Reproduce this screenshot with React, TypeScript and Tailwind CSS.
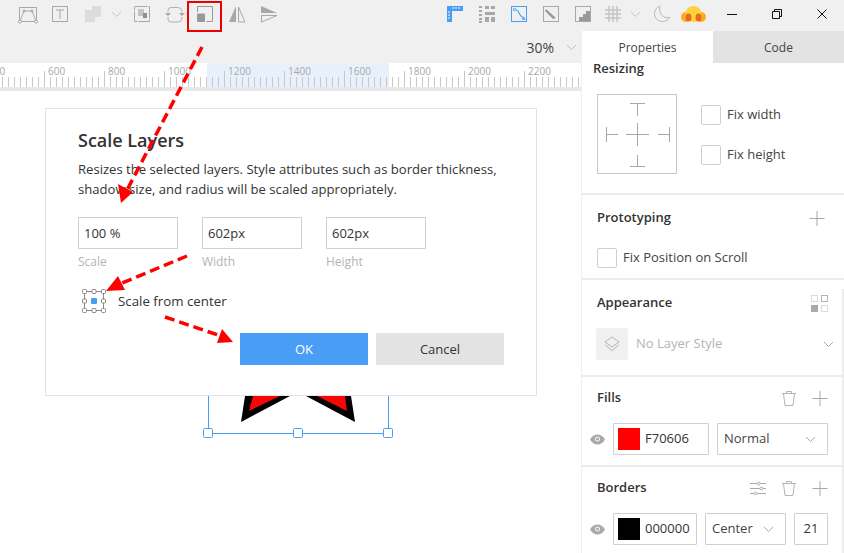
import type { ReactNode } from 'react';

const GREY = '#a8a8a8';
const BLUE = '#4a9df5';

function Icon({ children, className = 'w-8' }: { children: ReactNode; className?: string }) {
  return (
    <div className={`${className} h-6 flex items-center justify-center shrink-0`}>
      <svg width="24" height="24" viewBox="0 0 24 24" fill="none" stroke={GREY} strokeWidth="1">
        {children}
      </svg>
    </div>
  );
}

function Chevron({ className = 'w-4', color = '#c4c4c4' }: { className?: string; color?: string }) {
  return (
    <div className={`${className} flex items-center justify-center shrink-0`}>
      <svg width="11" height="7" viewBox="0 0 11 7" fill="none" stroke={color}>
        <path d="M1 1l4.5 4.5L10 1" />
      </svg>
    </div>
  );
}

function TopBar() {
  return (
    <div className="h-[31px] bg-[#f0f0f0] flex items-start pl-3 shrink-0">
      <div className="flex items-center h-7">
        <Icon>
          <rect x="3.5" y="5.5" width="17" height="14" />
          <path d="M4 19l4-10h8l4 10" />
          <circle cx="4" cy="19.5" r="1.5" fill="#f0f0f0" />
          <circle cx="20" cy="19.5" r="1.5" fill="#f0f0f0" />
          <circle cx="8" cy="9" r="1" fill={GREY} />
          <circle cx="16" cy="9" r="1" fill={GREY} />
        </Icon>
        <Icon>
          <rect x="4.5" y="4.5" width="15" height="15" />
          <path d="M8 8h8M12 8v9" />
        </Icon>
        <Icon>
          <rect x="5" y="8" width="10" height="12" fill="#dcdcdc" stroke="none" />
          <rect x="12" y="4" width="9" height="11" fill="#dcdcdc" stroke="none" />
        </Icon>
        <Chevron />
        <div className="w-0.5" />
        <Icon>
          <rect x="4.5" y="4.5" width="15" height="15" strokeDasharray="13 1" />
          <rect x="8" y="7" width="6" height="7" fill="#c4c4c4" stroke="none" />
          <rect x="13" y="11" width="4" height="5" fill="#8f8f8f" stroke="none" />
        </Icon>
        <Icon>
          <path
            d="M9 5.500h7a4 4 0 0 1 4 4v1M20 15v1a4 4 0 0 1-4 4H9a3 3 0 0 1-3-3v-2M6 10V8.500a3 3 0 0 1 3-3"
            stroke="#b0b0b0"
          />
          <path d="M3 11h6l-3 3zM17 11h6l-3 3z" fill="#a8a8a8" stroke="none" />
        </Icon>
        <div className="-ml-px">
          <Icon>
            <path d="M4.5 10V4.500h15v15h-6" stroke="#999" />
            <rect x="4" y="11.500" width="8" height="8.500" rx="1" fill="#999" stroke="none" />
          </Icon>
        </div>
        <Icon>
          <path d="M11 4v16H4z" fill={GREY} stroke="none" />
          <path d="M13.500 5l6.500 15h-6.500z" />
        </Icon>
        <Icon>
          <path d="M4 4l16 7H4z" fill={GREY} stroke="none" />
          <path d="M4.500 13.500h15.500L4.500 20z" />
        </Icon>
      </div>
      <div className="ml-auto flex items-center h-7">
        <Icon>
          <path d="M4 4h16v5h-11v11H4z" fill={BLUE} stroke="none" />
          <path d="M10 5v2M13 5v2M16 5v2M5 10h2M5 13h2M5 16h2" stroke="#fff" />
        </Icon>
        <Icon>
          <path d="M4 5h3M4 9h3M4 13h3M4 17h3M4 20h3" strokeWidth="2" />
          <rect x="10" y="4" width="4" height="3" fill={GREY} stroke="none" />
          <rect x="16" y="4" width="4" height="3" fill={GREY} stroke="none" />
          <rect x="10" y="10" width="10" height="3" fill={GREY} stroke="none" />
          <rect x="10" y="15" width="4" height="5" fill={GREY} stroke="none" />
          <rect x="16" y="15" width="4" height="5" fill={GREY} stroke="none" />
        </Icon>
        <Icon>
          <rect x="4.500" y="4.500" width="15" height="15" stroke={BLUE} />
          <circle cx="7.500" cy="7.500" r="1.200" stroke={BLUE} />
          <path d="M9 8c2.500 0 2.500 2 3.500 4s2 3 4 3.500" stroke={BLUE} strokeWidth="1.200" />
          <path d="M18.500 18l-4-.5 2.500-3z" fill={BLUE} stroke="none" />
        </Icon>
        <Icon>
          <rect x="4.500" y="4.500" width="15" height="15" />
          <path d="M7 7l10 9-3 1-8-8z" fill="#999" stroke="none" />
        </Icon>
        <Icon>
          <rect x="4.500" y="4.500" width="15" height="15" />
          <path d="M19 9v10H8v-4h4v-3h3V9z" fill="#999" stroke="none" />
        </Icon>
        <div className="-ml-0.5">
          <Icon>
            <path d="M8 4v16M12 4v16M16 4v16M4 8h16M4 12h16M4 16h16" stroke="#c4c4c4" strokeWidth="1.500" />
          </Icon>
        </div>
        <div className="-ml-0.5">
          <Chevron />
        </div>
        <div className="ml-0.5">
          <Icon>
            <path d="M11 4a8 8 0 1 0 9.500 11.500C15 17 9 12 11 4z" stroke="#b8b8b8" />
          </Icon>
        </div>
        <div className="w-8 flex justify-center">
          <svg width="25" height="16" viewBox="0 0 25 16">
            <circle cx="5" cy="11" r="5" fill="#fbab26" />
            <circle cx="20" cy="11" r="5" fill="#fbab26" />
            <circle cx="12.500" cy="8" r="8" fill="#fdd23e" />
            <ellipse cx="7.500" cy="11.500" rx="3" ry="4" fill="#e96a1c" />
            <ellipse cx="17.500" cy="11.500" rx="3" ry="4" fill="#e96a1c" />
          </svg>
        </div>
        <WindowButton>
          <path d="M0 5.500h10" />
        </WindowButton>
        <WindowButton>
          <path d="M.500 2.500h7v7h-7zM2.500 2.500v-2h7v7h-2" />
        </WindowButton>
        <WindowButton>
          <path d="M.500.500l9 9M9.500.500l-9 9" />
        </WindowButton>
      </div>
    </div>
  );
}

function WindowButton({ children }: { children: ReactNode }) {
  return (
    <div className="w-[45px] flex justify-center shrink-0">
      <svg width="10" height="10" viewBox="0 0 10 10" fill="none" stroke="#111">
        {children}
      </svg>
    </div>
  );
}

function Ruler() {
  const ticks = Array.from({ length: 100 }, (_, i) => -16 + i * 6);
  const labels = [400, 600, 800, 1000, 1200, 1400, 1600, 1800, 2000, 2200];
  return (
    <div className="h-6 bg-white shrink-0">
      <svg width="581" height="24" viewBox="0 0 581 24" className="block">
        <rect x="207" y="0" width="182" height="24" fill="#e8f1fb" />
        {ticks.map((x, i) => (
          <path key={x} d={`M${x + 0.5} ${i % 10 === 0 ? 8 : 14}V24`} stroke="#c8c8c8" />
        ))}
        {labels.map((v) => (
          <text
            key={v}
            x={-16 + (v / 200 - 2) * 60 + 4}
            y="12"
            fontSize="10"
            fill="#a8a8a8"
            fontFamily="'Open Sans', sans-serif"
          >
            {v}
          </text>
        ))}
      </svg>
    </div>
  );
}

function DialogField({ value, label }: { value: string; label: string }) {
  return (
    <div className="w-[100px]">
      <div className="h-8 border border-[#cfcfcf] px-[5px] pt-0.5 flex items-center text-[13px] text-[#333]">
        {value}
      </div>
      <div className="mt-[5px] text-[12px] leading-4 text-[#b4b4b4]">{label}</div>
    </div>
  );
}

function AnchorIcon() {
  const squares = [
    [2.5, 2.5], [12, 2.5], [21.5, 2.5],
    [2.5, 12], [21.5, 12],
    [2.5, 21.5], [12, 21.5], [21.5, 21.5],
  ];
  return (
    <svg width="24" height="24" viewBox="0 0 24 24" fill="none" stroke="#888" className="shrink-0">
      <rect x="2.500" y="2.500" width="19" height="19" />
      {squares.map(([x, y]) => (
        <rect key={`${x}-${y}`} x={x - 2} y={y - 2} width="4" height="4" rx="1" fill="#fff" />
      ))}
      <rect x="9" y="9" width="6" height="6" rx="1" fill={BLUE} stroke="none" />
    </svg>
  );
}

function Dialog() {
  return (
    <div className="absolute left-[45px] top-[17px] w-[492px] h-[288px] bg-white border border-[#e2e2e2] px-8 pt-[19px]">
      <h1 className="text-[18px] leading-6 font-semibold text-[#333]">Scale Layers</h1>
      <p className="mt-[7px] text-[13.100px] leading-5 text-[#333] whitespace-nowrap">
        Resizes the selected layers. Style attributes such as border thickness,
        <br />
        shadow size, and radius will be scaled appropriately.
      </p>
      <div className="mt-[18px] flex gap-6">
        <DialogField value="100 %" label="Scale" />
        <DialogField value="602px" label="Width" />
        <DialogField value="602px" label="Height" />
      </div>
      <div className="mt-[19px] ml-1 flex items-center gap-3 text-[13.300px] text-[#333]">
        <AnchorIcon />
        <span className="pt-0.5">Scale from center</span>
      </div>
      <div className="mt-5 flex justify-end gap-2 text-[13px]">
        <div className="w-32 h-8 pt-0.5 bg-[#4a9df5] text-white flex items-center justify-center">OK</div>
        <div className="w-32 h-8 pt-0.5 bg-[#e3e3e3] text-[#333] flex items-center justify-center">Cancel</div>
      </div>
    </div>
  );
}

function Canvas() {
  return (
    <div className="relative flex-1 bg-white">
      <svg width="581" height="462" viewBox="0 91 581 462" className="absolute left-0 top-0">
        <path d="M245 396L241 422 290 396z" fill="#000" />
        <path d="M306 396L355 422 351 396z" fill="#000" />
        <path d="M253 396L249 411 280 396z" fill="#f70606" />
        <path d="M317 396L347 411 345 396z" fill="#f70606" />
        <rect x="208.500" y="380.500" width="180" height="53" stroke={BLUE} fill="none" />
        {[208, 298, 388].map((x) => (
          <rect key={x} x={x - 4.500} y="428.500" width="9" height="9" rx="1" fill="#fff" stroke={BLUE} />
        ))}
      </svg>
      <Dialog />
    </div>
  );
}

function Section({ title, actions, children, className }: {
  title: string;
  actions?: ReactNode;
  children: ReactNode;
  className: string;
}) {
  return (
    <section className={`pl-[15px] pr-4 ${className}`}>
      <div className="flex items-center h-5 justify-between">
        <h2 className="text-[13px] font-semibold text-[#333]">{title}</h2>
        <div className="flex items-center gap-4">{actions}</div>
      </div>
      {children}
    </section>
  );
}

function Plus() {
  return (
    <svg width="16" height="16" viewBox="0 0 16 16" stroke={GREY}>
      <path d="M.5 8.500h15M8 1v15" />
    </svg>
  );
}

function Trash() {
  return (
    <svg width="14" height="16" viewBox="0 0 14 16" fill="none" stroke="#b4b4b4">
      <path d="M0 3.500h14M4.500 3V1.500h5V3M1.500 3.500l1.500 12h8l1.500-12" />
    </svg>
  );
}

function Sliders() {
  return (
    <svg width="16" height="14" viewBox="0 0 16 14" fill="none" stroke="#aaa">
      <path d="M0 2.500h7M10 2.500h6M0 7.500h10M13 7.500h3M0 12.500h4M7 12.500h9" />
      <circle cx="8.500" cy="2.500" r="1.500" />
      <circle cx="11.500" cy="7.500" r="1.500" />
      <circle cx="5.500" cy="12.500" r="1.500" />
    </svg>
  );
}

function Eye() {
  return (
    <svg width="15" height="11" viewBox="0 0 15 11" className="shrink-0">
      <path d="M0 5.500C2 2 4.500 .5 7.500 .5S13 2 15 5.500C13 9 10.500 10.500 7.500 10.500S2 9 0 5.500z" fill="#aaa" />
      <circle cx="7.500" cy="5" r="2.500" fill="#f4f4f4" />
      <circle cx="7.500" cy="5" r="1.500" fill="#aaa" />
    </svg>
  );
}

function Checkbox({ label }: { label: string }) {
  return (
    <div className="flex items-center gap-[6px] text-[13px] text-[#444]">
      <span className="w-5 h-5 border border-[#cfcfcf] rounded-[2px] shrink-0" />
      {label}
    </div>
  );
}

function ResizeBox() {
  return (
    <div className="w-20 h-20 border border-[#c8c8c8] shrink-0">
      <svg width="78" height="78" viewBox="0 0 78 78" fill="none" stroke={GREY}>
        <path d="M32 8.500h15M39.500 8v13M32 71.500h15M39.500 60v11M8.500 32v15M8 39.500h12M71.500 32v15M60 39.500h11M28 39.500h23M39.500 28v23" />
      </svg>
    </div>
  );
}

function ColorField({ color, value, className }: { color: string; value: string; className: string }) {
  return (
    <div className={`h-8 border border-[#cfcfcf] rounded-[1px] flex items-center pl-1 gap-[5px] text-[13px] text-[#333] ${className}`}>
      <span className="w-[22px] h-[22px] shrink-0" style={{ backgroundColor: color }} />
      {value}
    </div>
  );
}

function SelectField({ value, className }: { value: string; className: string }) {
  return (
    <div className={`h-8 border border-[#cfcfcf] rounded-[1px] flex items-center justify-between pl-[6px] pr-[11px] text-[13px] text-[#444] ${className}`}>
      {value}
      <Chevron className="w-[11px]" color="#aaa" />
    </div>
  );
}

function Inspector() {
  const rule = 'border-b-2 border-[#ececec]';
  return (
    <aside className="relative w-[263px] shrink-0 flex flex-col bg-white border-l border-[#efefef] text-[#333] overflow-hidden">
      <div className="h-8 flex shrink-0 text-[12px] font-medium text-[#444]">
        <div className="w-[131px] pt-px bg-white flex items-center justify-center">Properties</div>
        <div className="flex-1 pt-px bg-[#e3e3e3] flex items-center justify-center">Code</div>
      </div>
      <section className={`h-[132px] pr-4 ${rule}`}>
        <h2 className="pl-[11px] text-[13px] font-semibold leading-[11px] text-[#333]">Resizing</h2>
        <div className="mt-5 ml-[15px] flex items-center gap-6">
          <ResizeBox />
          <div className="flex flex-col gap-5 pt-0.5">
            <Checkbox label="Fix width" />
            <Checkbox label="Fix height" />
          </div>
        </div>
      </section>
      <Section
        title="Prototyping"
        actions={<div className="mr-[3px] flex"><Plus /></div>}
        className={`h-[85px] pt-[13px] ${rule}`}
      >
        <div className="mt-5">
          <Checkbox label="Fix Position on Scroll" />
        </div>
      </Section>
      <Section
        title="Appearance"
        className={`h-[97px] pt-[13px] ${rule}`}
        actions={
          <svg width="17" height="17" viewBox="0 0 17 17" fill="none" stroke="#b4b4b4">
            <rect x=".5" y=".5" width="6" height="6" strokeDasharray="1 1" />
            <rect x="10.500" y=".5" width="6" height="6" />
            <rect x="0" y="10" width="7" height="7" fill="#aaa" stroke="none" />
            <rect x="10.500" y="10.500" width="6" height="6" strokeDasharray="1 1" />
          </svg>
        }
      >
        <div className="mt-[15px] flex items-center text-[13px] text-[#b4b4b4] -ml-px">
          <div className="w-8 h-8 rounded-[2px] bg-[#f0f0f0] flex items-center justify-center mr-2">
            <svg width="18" height="18" viewBox="0 0 18 18" fill="none" stroke="#b4b4b4">
              <path d="M9 2l7 5-7 5-7-5zM2 10l7 5.500 7-5.500" />
            </svg>
          </div>
          No Layer Style
          <Chevron className="w-[11px] ml-auto -mr-[6px]" color="#aaa" />
        </div>
      </Section>
      <Section
        title="Fills"
        className={`h-[90px] pt-[11px] ${rule}`}
        actions={
          <>
            <Trash />
            <Plus />
          </>
        }
      >
        <div className="mt-[15px] -ml-[7px] flex items-center">
          <Eye />
          <ColorField color="#ff0000" value="F70606" className="w-24 ml-2" />
          <SelectField value="Normal" className="w-[111px] ml-2" />
        </div>
      </Section>
      <Section
        title="Borders"
        className="flex-1 pt-[11px]"
        actions={
          <>
            <Sliders />
            <Trash />
            <Plus />
          </>
        }
      >
        <div className="mt-[15px] -ml-[7px] flex items-center">
          <Eye />
          <ColorField color="#000000" value="000000" className="w-[84px] ml-2" />
          <SelectField value="Center" className="w-[81px] ml-2" />
          <div className="w-[34px] h-8 ml-2 border border-[#cfcfcf] rounded-[1px] flex items-center justify-center text-[13px] text-[#333]">
            21
          </div>
        </div>
      </Section>
      <div className="absolute right-0 top-[258px] bottom-0 w-0.5 bg-[#ececec]" />
    </aside>
  );
}

function Arrow({ d, head }: { d: string; head: string }) {
  return (
    <>
      <path d={d} stroke="#ff0000" strokeWidth="3.500" strokeDasharray="10 5" fill="none" />
      <path d={head} fill="#ff0000" />
    </>
  );
}

export default function App() {
  return (
    <div
      className="relative w-[844px] h-[553px] overflow-hidden flex flex-col bg-white"
      style={{ fontFamily: "'Open Sans', 'Noto Sans', sans-serif" }}
    >
      <TopBar />
      <div className="flex-1 flex min-h-0">
        <main className="w-[581px] shrink-0 flex flex-col">
          <div className="h-8 pt-px bg-[#f0f0f0] flex items-center justify-end text-[14px] text-[#444] shrink-0">
            30%
            <Chevron className="w-5 ml-[7px]" />
          </div>
          <Ruler />
          <div className="h-1 bg-[#e8e8e8] shrink-0" />
          <Canvas />
        </main>
        <Inspector />
      </div>
      <div className="absolute left-[187px] top-px w-[35px] h-[31px] border-2 border-[#ee0000]" />
      <svg width="844" height="553" className="absolute left-0 top-0 pointer-events-none">
        <Arrow d="M202 47L127 190" head="M121 203L118 184 133 192z" />
        <Arrow d="M187 256L122 283" head="M106 291L118 276 125 290z" />
        <Arrow d="M165 317L218 335" head="M233 342L217 343 222 329z" />
      </svg>
    </div>
  );
}
